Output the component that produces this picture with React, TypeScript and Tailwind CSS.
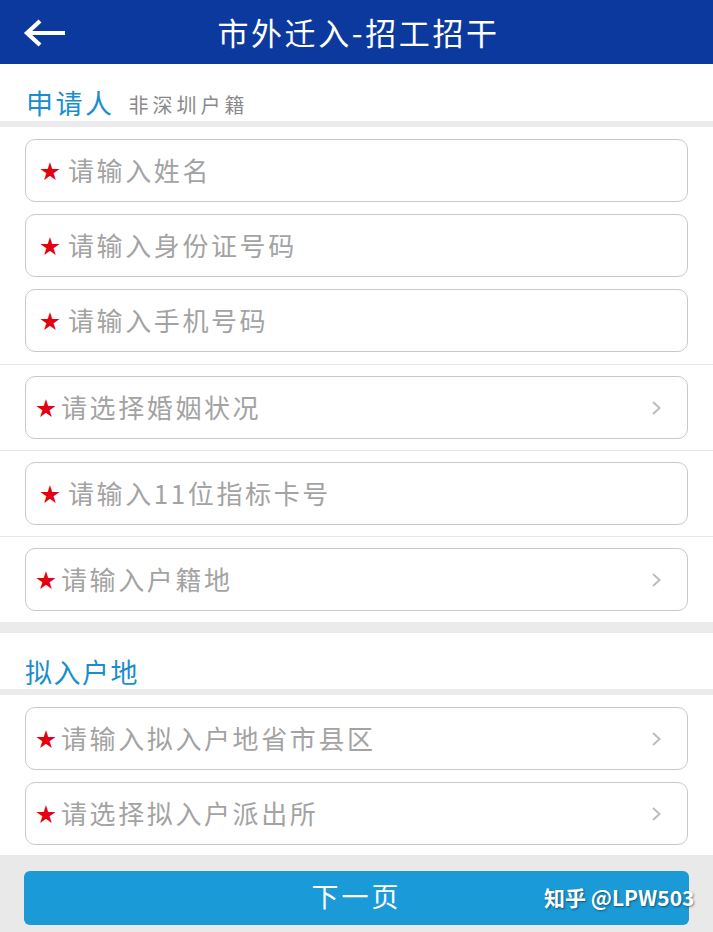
import React from "react";

const font = { fontFamily: '"Noto Sans CJK SC", "Noto Sans", sans-serif' };

function Field({ text, select, star = "input" }: { text: string; select?: boolean; star?: "input" | "select" }) {
  return (
    <div className="h-[63px] mx-[25px] border border-[#c9c9c9] rounded-[10px] bg-white flex items-center">
      {star === "select" ? (
        <span className="ml-[10px] text-[#e4000f] text-[20px] leading-none w-[17px]">★</span>
      ) : (
        <span className="ml-[14px] text-[#e4000f] text-[20px] leading-none w-[17px]">★</span>
      )}
      <span
        className={`${star === "select" ? "ml-[8px]" : "ml-[11px]"} text-[26px] tracking-[2.6px] text-[#a3a3a3] leading-none flex-1 mt-[-2px]`}
      >
        {text}
      </span>
      {select && (
        <svg width="12" height="16" viewBox="0 0 12 16" className="mr-[25px]">
          <path d="M3 2 L9.5 8 L3 14" fill="none" stroke="#bdbdbd" strokeWidth="2" />
        </svg>
      )}
    </div>
  );
}

export default function App() {
  return (
    <div className="w-[713px] h-[932px] bg-white flex flex-col overflow-hidden" style={font}>
      {/* Header */}
      <div className="h-[64px] bg-[#0b399e] relative flex items-center justify-center shrink-0">
        <svg className="absolute left-[22px] top-[19px]" width="46" height="30" viewBox="0 0 46 30">
          <path d="M5 14 L43 14" stroke="white" strokeWidth="4.2" fill="none" />
          <path d="M18 2 L5 14 L18 26" stroke="white" strokeWidth="4.2" fill="none" strokeLinejoin="miter" />
        </svg>
        <span className="text-white text-[31px] tracking-[2.6px] leading-none mt-[-2px] pl-[4px]">市外迁入-招工招干</span>
      </div>

      {/* Section 1 title */}
      <div className="h-[57px] flex items-end pb-[5px] pl-[26px] shrink-0">
        <span className="text-[#1a8dcc] text-[27px] tracking-[2.5px] leading-none">申请人</span>
        <span className="ml-[14px] text-[#8a8a8a] text-[20px] tracking-[4px] leading-none mb-[1px]">非深圳户籍</span>
      </div>
      <div className="h-[6px] bg-[#ebebeb] shrink-0" />

      <div className="flex flex-col gap-[12px] pt-[12px] pb-[12px] shrink-0">
        <Field text="请输入姓名" />
        <Field text="请输入身份证号码" />
        <Field text="请输入手机号码" />
      </div>
      <div className="h-px bg-[#e6e6e6] shrink-0" />
      <div className="py-[11px] shrink-0">
        <Field text="请选择婚姻状况" select star="select" />
      </div>
      <div className="h-px bg-[#e6e6e6] shrink-0" />
      <div className="py-[11px] shrink-0">
        <Field text="请输入11位指标卡号" />
      </div>
      <div className="h-px bg-[#e6e6e6] shrink-0" />
      <div className="py-[11px] shrink-0">
        <Field text="请输入户籍地" select star="select" />
      </div>
      <div className="h-[11px] bg-[#ebebeb] shrink-0" />

      {/* Section 2 title */}
      <div className="h-[56px] flex items-end pb-[4px] pl-[25px] shrink-0">
        <span className="text-[#1a8dcc] text-[27px] tracking-[1.5px] leading-none">拟入户地</span>
      </div>
      <div className="h-[6px] bg-[#ebebeb] shrink-0" />

      <div className="flex flex-col gap-[12px] pt-[12px] pb-[10px] shrink-0">
        <Field text="请输入拟入户地省市县区" select star="select" />
        <Field text="请选择拟入户派出所" select star="select" />
      </div>

      {/* Footer */}
      <div className="flex-1 bg-[#e9e9e9] pt-[16px] px-[24px]">
        <div className="relative h-[54px] rounded-[6px] bg-[#1a9ad6] flex items-center justify-center">
          <span className="text-white text-[27px] tracking-[3px] leading-none mt-[-6px]">下一页</span>
          <span
            className="absolute left-[520px] top-[16px] text-white text-[21px] font-semibold leading-none whitespace-nowrap"
            style={{ textShadow: "1px 1px 2px rgba(0,0,0,0.45)" }}
          >
            知乎 @LPW503
          </span>
        </div>
      </div>
    </div>
  );
}
